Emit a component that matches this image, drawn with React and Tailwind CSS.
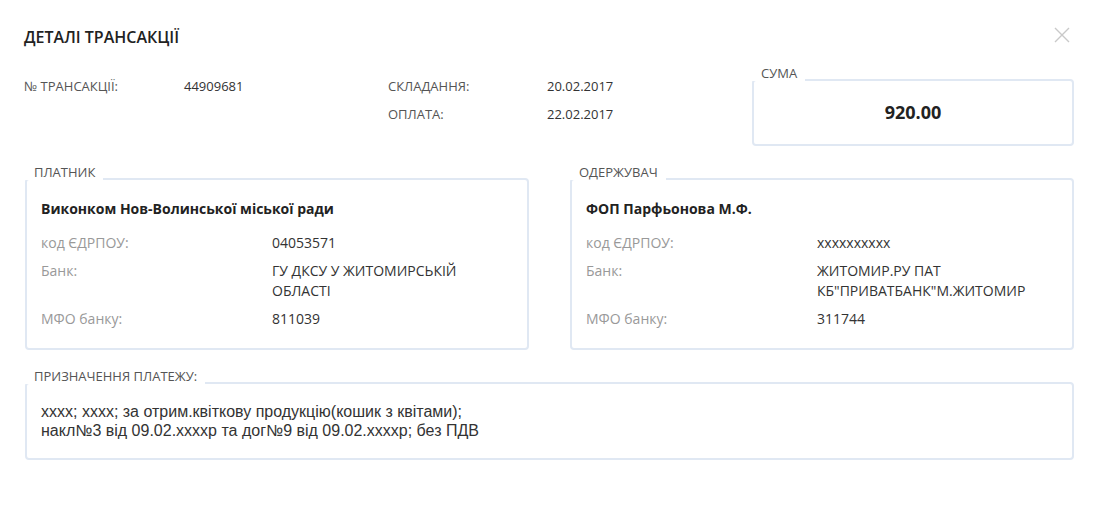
import React from "react";

function Legend({ children }) {
  return (
    <div className="absolute left-[-3px] top-[-16px] bg-white pl-[10px] pr-[8px] text-[13px] leading-[16px] text-[#555]">
      {children}
    </div>
  );
}

function Party({ title, name, rows }) {
  return (
    <div className="relative flex-1 rounded-[4px] border-2 border-[#e0e8f3] pl-[14px] pr-[14px] pt-[19px] pb-[19px]">
      <Legend>{title}</Legend>
      <div className="text-[14px] font-bold leading-[20px] text-[#222]">{name}</div>
      <div className="mt-[14px] flex flex-col gap-[8px]">
        {rows.map(([l, v]) => (
          <div key={l} className="flex text-[14px] leading-[20px]">
            <div className="w-[231px] shrink-0 text-[#999]">{l}</div>
            <div className="text-[#333]">{v}</div>
          </div>
        ))}
      </div>
    </div>
  );
}

export default function App() {
  return (
    <div
      className="relative h-[516px] w-[1102px] bg-white pl-[25px] pr-[28px]"
      style={{ fontFamily: '"Open Sans", "Noto Sans", sans-serif' }}
    >
      <button className="absolute right-[32px] top-[27px] h-[16px] w-[16px]" aria-label="close">
        <svg viewBox="0 0 16 16" width="16" height="16">
          <path d="M1 1 L15 15 M15 1 L1 15" stroke="#c9c9c9" strokeWidth="1.4" fill="none" />
        </svg>
      </button>
      <div className="pt-[27px] ml-[-1px] text-[16px] font-semibold leading-[20px] text-[#222]">
        ДЕТАЛІ ТРАНСАКЦІЇ
      </div>

      <div className="mt-[26px] flex items-start">
        <div className="flex w-[363px] shrink-0">
          <div className="flex h-[28px] items-center">
            <div className="ml-[-1px] w-[160px] text-[13px] text-[#555]">№ ТРАНСАКЦІЇ:</div>
            <div className="text-[13px] text-[#333]">44909681</div>
          </div>
        </div>
        <div className="flex w-[364px] shrink-0 flex-col">
          <div className="flex h-[28px] items-center">
            <div className="w-[159px] text-[13px] text-[#555]">СКЛАДАННЯ:</div>
            <div className="text-[13px] text-[#333]">20.02.2017</div>
          </div>
          <div className="flex h-[28px] items-center">
            <div className="w-[159px] text-[13px] text-[#555]">ОПЛАТА:</div>
            <div className="text-[13px] text-[#333]">22.02.2017</div>
          </div>
        </div>
        <div className="relative mt-[6px] flex h-[67px] flex-1 items-center justify-center rounded-[4px] border-2 border-[#e0e8f3]">
          <Legend>СУМА</Legend>
          <div className="text-[18px] font-bold text-[#222]">920.00</div>
        </div>
      </div>

      <div className="mt-[32px] flex gap-[41px]">
        <Party
          title="ПЛАТНИК"
          name="Виконком Нов-Волинської міської ради"
          rows={[
            ["код ЄДРПОУ:", "04053571"],
            ["Банк:", <>ГУ ДКСУ У ЖИТОМИРСЬКІЙ<br />ОБЛАСТІ</>],
            ["МФО банку:", "811039"],
          ]}
        />
        <Party
          title="ОДЕРЖУВАЧ"
          name="ФОП Парфьонова М.Ф."
          rows={[
            ["код ЄДРПОУ:", "xxxxxxxxxx"],
            ["Банк:", <>ЖИТОМИР.РУ ПАТ<br />КБ"ПРИВАТБАНК"М.ЖИТОМИР</>],
            ["МФО банку:", "311744"],
          ]}
        />
      </div>

      <div className="relative mt-[32px] rounded-[4px] border-2 border-[#e0e8f3] pl-[14px] pt-[18px] pb-[18px]">
        <Legend>ПРИЗНАЧЕННЯ ПЛАТЕЖУ:</Legend>
        <div
          className="text-[16px] leading-[19px] text-[#333]"
          style={{ fontFamily: '"Liberation Sans", Arial, sans-serif' }}
        >
          xxxx; xxxx; за отрим.квіткову продукцію(кошик з квітами);
          <br />
          накл№3 від 09.02.xxxxр та дог№9 від 09.02.xxxxр; без ПДВ
        </div>
      </div>
    </div>
  );
}
